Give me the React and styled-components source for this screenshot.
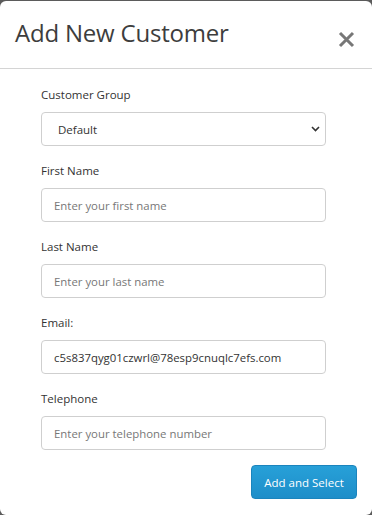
import React from "react";
import styled, { createGlobalStyle } from "styled-components";

const Global = createGlobalStyle`
  html, body { margin: 0; padding: 0; background: #5b5b5b; }
  body { font-family: "Open Sans", "Noto Sans", sans-serif; }
  * { box-sizing: border-box; }
`;

const Modal = styled.div`
  width: 372px;
  height: 514px;
  margin-top: 1px;
  background: #fff;
  border-radius: 6px;
  overflow: hidden;
`;

const Header = styled.div`
  height: 68px;
  border-bottom: 1px solid #d4d4d4;
  display: flex;
  align-items: center;
  justify-content: space-between;
  padding: 0 17px 5px 15px;
`;

const Title = styled.h4`
  margin: 0;
  font-size: 24px;
  font-weight: 400;
  color: #3d3d3d;
  letter-spacing: -0.2px;
`;

const Close = styled.button`
  border: 0;
  background: none;
  padding: 0;
  margin-top: 14px;
  width: 17px;
  height: 17px;
  display: flex;
  cursor: pointer;
`;

const Body = styled.div`
  padding: 16px 15px 0 41px;
  display: flex;
  flex-direction: column;
`;

const Group = styled.div`
  width: 285px;
  margin-bottom: 15px;
`;

const Label = styled.label`
  display: block;
  font-size: 11.5px;
  line-height: 20px;
  color: #333;
  margin-bottom: 7px;
`;

const Input = styled.input`
  display: block;
  width: 100%;
  height: 34px;
  border: 1px solid #cfcfcf;
  border-radius: 4px;
  padding: 0 12px;
  font-family: inherit;
  font-size: 11.4px;
  color: #333;
  outline: none;
  &::placeholder { color: #777; }
`;

const SelectWrap = styled.div`
  position: relative;
`;

const Select = styled.select`
  display: block;
  width: 100%;
  height: 34px;
  border: 1px solid #cfcfcf;
  border-radius: 4px;
  padding: 0 24px 0 16px;
  font-family: inherit;
  font-size: 11.5px;
  color: #333;
  background: #fff;
  outline: none;
  appearance: none;
`;

const Chevron = styled.svg`
  position: absolute;
  right: 6px;
  top: 14px;
  pointer-events: none;
`;

const Actions = styled.div`
  display: flex;
  justify-content: flex-end;
`;

const Button = styled.button`
  height: 34px;
  width: 106px;
  border: 1px solid #1b84bd;
  border-radius: 4px;
  background: linear-gradient(#27a0d8, #1e8ec9);
  color: #fff;
  font-family: inherit;
  font-size: 11.5px;
  padding: 0;
`;

const fields = [
  { label: "First Name", placeholder: "Enter your first name" },
  { label: "Last Name", placeholder: "Enter your last name" },
  { label: "Email:", value: "c5s837qyg01czwrl@78esp9cnuqlc7efs.com" },
  { label: "Telephone", placeholder: "Enter your telephone number" },
];

export default function App() {
  return (
    <>
      <Global />
      <Modal>
        <Header>
          <Title>Add New Customer</Title>
          <Close aria-label="Close">
            <svg width="17" height="17" viewBox="0 0 17 17">
              <path d="M2 2 L15 15 M15 2 L2 15" stroke="#777" strokeWidth="3" />
            </svg>
          </Close>
        </Header>
        <Body>
          <Group>
            <Label>Customer Group</Label>
            <SelectWrap>
              <Select defaultValue="default">
                <option value="default">Default</option>
              </Select>
              <Chevron width="9" height="6" viewBox="0 0 9 6">
                <path d="M1 1 L4.5 4.5 L8 1" fill="none" stroke="#333" strokeWidth="1.6" />
              </Chevron>
            </SelectWrap>
          </Group>
          {fields.map((f) => (
            <Group key={f.label}>
              <Label>{f.label}</Label>
              <Input placeholder={f.placeholder} defaultValue={f.value} />
            </Group>
          ))}
          <Actions>
            <Button>Add and Select</Button>
          </Actions>
        </Body>
      </Modal>
    </>
  );
}
